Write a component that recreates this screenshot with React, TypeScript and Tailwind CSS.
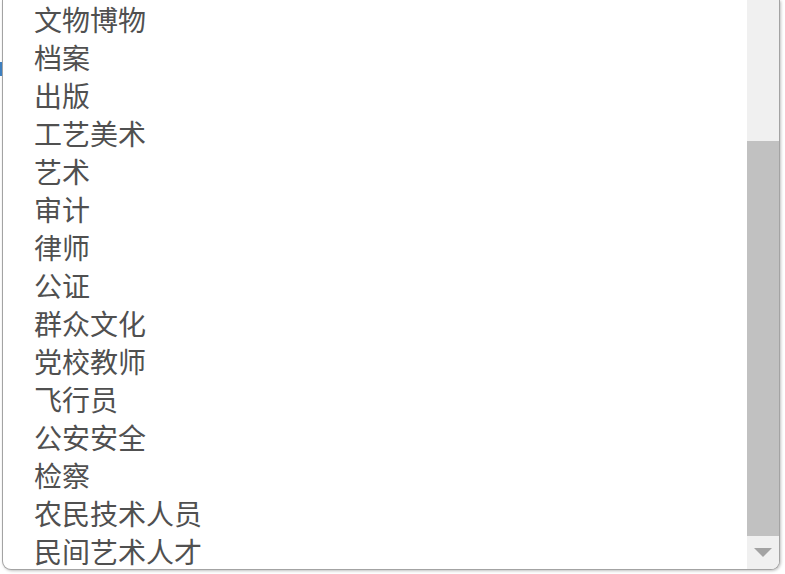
const items = [
  "文物博物",
  "档案",
  "出版",
  "工艺美术",
  "艺术",
  "审计",
  "律师",
  "公证",
  "群众文化",
  "党校教师",
  "飞行员",
  "公安安全",
  "检察",
  "农民技术人员",
  "民间艺术人才",
]

export default function App() {
  return (
    <div className="relative w-[785px] h-[574px] overflow-hidden bg-white font-['Noto_Sans_CJK_SC',sans-serif]">
      {/* edge of the field behind the list */}
      <div className="absolute left-0 top-[62px] w-[2px] h-[14px] bg-[#3d7fbf]" />

      <div className="ml-[2px] w-[778px] h-[570px] flex overflow-hidden bg-white border-x border-b border-[#a3a3a3] rounded-b-[9px] shadow-[1px_1px_3px_rgba(0,0,0,0.25)]">
        <ul className="flex-1">
          {items.map((item) => (
            <li key={item} className="h-[38px] pl-[31px] text-[28px] leading-[38px] text-[#505050]">
              {item}
            </li>
          ))}
        </ul>

        {/* Scrollbar */}
        <div className="w-[32px] flex flex-col bg-[#f0f0f0]">
          <div className="h-[141px]" />
          <div className="h-[395px] bg-[#c1c1c1]" />
          <div className="flex-1 flex items-center justify-center">
            <svg width="18" height="9" viewBox="0 0 18 9">
              <path d="M0 0 L18 0 L9 9 Z" fill="#a3a3a3" />
            </svg>
          </div>
        </div>
      </div>
    </div>
  )
}
